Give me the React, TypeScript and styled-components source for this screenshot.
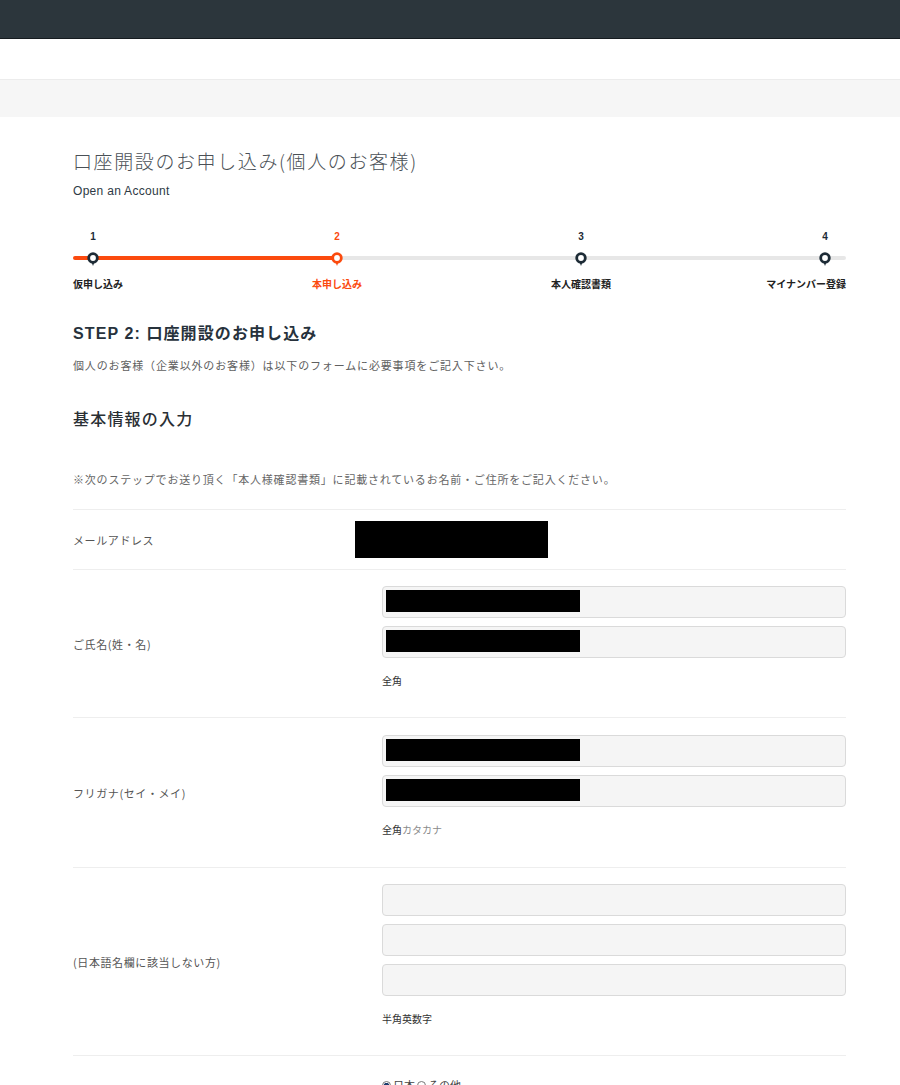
import React from "react";
import styled, { createGlobalStyle } from "styled-components";

const Global = createGlobalStyle`
  html, body { margin: 0; padding: 0; background: #fff; }
  body {
    font-family: "Liberation Sans", "Noto Sans CJK JP", sans-serif;
    color: #333;
  }
  * { box-sizing: border-box; }
`;

const ORANGE = "#fb4a0e";
const DARK = "#1d2b36";

const TopBar = styled.header`
  height: 39px;
  background: #2c363c;
  border-bottom: 1px solid #161c20;
`;

const NavSpace = styled.div`
  height: 40px;
  background: #fff;
`;

const Band = styled.div`
  height: 38px;
  background: #f6f6f6;
  border-top: 1px solid #ececec;
`;

const Main = styled.main`
  padding: 0 54px 0 73px;
`;

const Title = styled.h1`
  margin: 30px 0 0;
  font-family: "Noto Sans CJK JP", sans-serif;
  font-weight: 300;
  font-size: 19px;
  line-height: 28px;
  letter-spacing: 1.6px;
  color: #4a5056;
`;

const Subtitle = styled.p`
  margin: 9px 0 0;
  font-size: 12px;
  line-height: 14px;
  letter-spacing: 0.3px;
  color: #2e3a45;
`;

const Progress = styled.div`
  margin-top: 33px;
`;

const MarkRow = styled.div`
  display: flex;
  justify-content: space-between;
  padding: 0 15px 0 14px;
`;

const StepNum = styled.span<{ $active?: boolean }>`
  width: 12px;
  text-align: center;
  font-size: 10px;
  font-weight: 700;
  line-height: 12px;
  color: ${(p) => (p.$active ? ORANGE : DARK)};
`;

const TrackStack = styled.div`
  display: grid;
  margin-top: 9px;
  & > * { grid-area: 1 / 1; }
  align-items: center;
  height: 12px;
`;

const Track = styled.div<{ $done: number }>`
  height: 4px;
  border-radius: 2px;
  background: linear-gradient(
    to right,
    ${ORANGE} 0,
    ${ORANGE} ${(p) => p.$done}px,
    #e7e7e7 ${(p) => p.$done}px,
    #e7e7e7 100%
  );
`;

const Pin = styled.svg`
  width: 12px;
  height: 12px;
  overflow: visible;
  display: block;
`;

const LabelGrid = styled.div`
  display: grid;
  grid-template-columns: 142px 244px 244px 1fr;
  margin-top: 13px;
`;

const StepLabel = styled.span<{ $align: string; $active?: boolean }>`
  justify-self: ${(p) => p.$align};
  font-family: "Noto Sans CJK JP", sans-serif;
  font-size: 10px;
  font-weight: 700;
  line-height: 14px;
  color: ${(p) => (p.$active ? ORANGE : "#222")};
`;

const StepHeading = styled.h2`
  margin: 32px 0 0;
  font-family: "Liberation Sans", "Noto Sans CJK JP", sans-serif;
  font-size: 16px;
  font-weight: 700;
  line-height: 22px;
  letter-spacing: 1.1px;
  color: #27323c;
`;

const Lead = styled.p`
  margin: 13px 0 0;
  font-family: "Noto Sans CJK JP", sans-serif;
  font-size: 11px;
  line-height: 14px;
  letter-spacing: 0.85px;
  color: #606060;
`;

const SectionHeading = styled.h3`
  margin: 35px 0 0;
  font-family: "Noto Sans CJK JP", sans-serif;
  font-size: 16px;
  font-weight: 500;
  line-height: 22px;
  letter-spacing: 1.2px;
  color: #2a2f34;
`;

const Note = styled.p`
  margin: 43px 0 0;
  font-family: "Noto Sans CJK JP", sans-serif;
  font-size: 11px;
  line-height: 14px;
  letter-spacing: 0.8px;
  color: #666;
`;

const Form = styled.div`
  margin-top: 23px;
`;

const FieldRow = styled.div`
  display: grid;
  grid-template-columns: 309px 1fr;
  align-items: center;
  border-top: 1px solid #eeeeee;
`;

const FieldLabel = styled.div`
  font-family: "Noto Sans CJK JP", sans-serif;
  font-size: 11px;
  line-height: 14px;
  letter-spacing: 0.6px;
  color: #555;
`;

const FieldValue = styled.div<{ $pad: string }>`
  display: flex;
  flex-direction: column;
  gap: 8px;
  padding: ${(p) => p.$pad};
`;

const EmailRedact = styled.div`
  width: 193px;
  height: 37px;
  margin-left: -27px;
  background: #000;
`;

const InputBox = styled.div`
  height: 32px;
  padding: 3px;
  background: #f5f5f5;
  border: 1px solid #dadada;
  border-radius: 4px;
`;

const Redact = styled.div`
  width: 194px;
  height: 22px;
  background: #000;
`;

const Hint = styled.div`
  margin-top: 8px;
  font-family: "Noto Sans CJK JP", sans-serif;
  font-size: 10px;
  line-height: 14px;
  color: #333;
`;

const HintSoft = styled.span`
  color: #8a8a8a;
`;

const RadioLine = styled.div`
  font-family: "Noto Sans CJK JP", sans-serif;
  font-size: 11px;
  line-height: 14px;
  color: #444;
  display: flex;
  align-items: center;
  gap: 2px;
`;

const Radio = styled.span<{ $on?: boolean }>`
  display: inline-block;
  width: 9px;
  height: 9px;
  border-radius: 50%;
  border: 1px solid #777;
  background: ${(p) => (p.$on ? "radial-gradient(circle, #1d3d6e 0 2.5px, #fff 3px)" : "#fff")};
`;

const PinMark = ({ active }: { active?: boolean }) => {
  const c = active ? ORANGE : DARK;
  return (
    <Pin viewBox="0 0 12 12">
      <path d="M4.6 10.2 L6 14 L7.4 10.2 Z" fill={c} />
      <circle cx="6" cy="6" r="4.3" fill="#fff" stroke={c} strokeWidth="2.8" />
    </Pin>
  );
};

const steps = [
  { n: "1", label: "仮申し込み", align: "start" },
  { n: "2", label: "本申し込み", align: "center", active: true },
  { n: "3", label: "本人確認書類", align: "center" },
  { n: "4", label: "マイナンバー登録", align: "end" },
];

export default function App() {
  return (
    <>
      <Global />
      <TopBar />
      <NavSpace />
      <Band />
      <Main>
        <Title>口座開設のお申し込み(個人のお客様)</Title>
        <Subtitle>Open an Account</Subtitle>

        <Progress>
          <MarkRow>
            {steps.map((s) => (
              <StepNum key={s.n} $active={s.active}>
                {s.n}
              </StepNum>
            ))}
          </MarkRow>
          <TrackStack>
            <Track $done={264} />
            <MarkRow>
              {steps.map((s) => (
                <PinMark key={s.n} active={s.active} />
              ))}
            </MarkRow>
          </TrackStack>
          <LabelGrid>
            {steps.map((s) => (
              <StepLabel key={s.n} $align={s.align} $active={s.active}>
                {s.label}
              </StepLabel>
            ))}
          </LabelGrid>
        </Progress>

        <StepHeading>STEP 2: 口座開設のお申し込み</StepHeading>
        <Lead>個人のお客様（企業以外のお客様）は以下のフォームに必要事項をご記入下さい。</Lead>

        <SectionHeading>基本情報の入力</SectionHeading>
        <Note>※次のステップでお送り頂く「本人様確認書類」に記載されているお名前・ご住所をご記入ください。</Note>

        <Form>
          <FieldRow>
            <FieldLabel>メールアドレス</FieldLabel>
            <FieldValue $pad="11px 0 11px">
              <EmailRedact />
            </FieldValue>
          </FieldRow>

          <FieldRow>
            <FieldLabel>ご氏名(姓・名)</FieldLabel>
            <FieldValue $pad="16px 0 29px">
              <InputBox>
                <Redact />
              </InputBox>
              <InputBox>
                <Redact />
              </InputBox>
              <Hint>全角</Hint>
            </FieldValue>
          </FieldRow>

          <FieldRow>
            <FieldLabel>フリガナ(セイ・メイ)</FieldLabel>
            <FieldValue $pad="17px 0 30px">
              <InputBox>
                <Redact />
              </InputBox>
              <InputBox>
                <Redact />
              </InputBox>
              <Hint>
                全角<HintSoft>カタカナ</HintSoft>
              </Hint>
            </FieldValue>
          </FieldRow>

          <FieldRow>
            <FieldLabel>(日本語名欄に該当しない方)</FieldLabel>
            <FieldValue $pad="16px 0 29px">
              <InputBox />
              <InputBox />
              <InputBox />
              <Hint>半角英数字</Hint>
            </FieldValue>
          </FieldRow>

          <FieldRow>
            <FieldLabel />
            <FieldValue $pad="22px 0 30px">
              <RadioLine>
                <Radio $on />日本 <Radio />その他
              </RadioLine>
            </FieldValue>
          </FieldRow>
        </Form>
      </Main>
    </>
  );
}
